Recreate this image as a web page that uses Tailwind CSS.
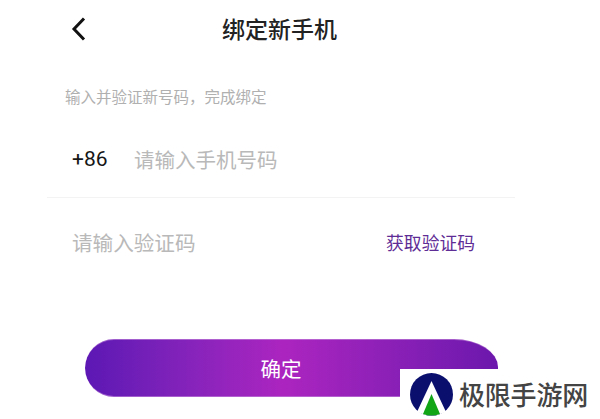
<!DOCTYPE html>
<html lang="zh-CN">
<head>
<meta charset="utf-8">
<script src="https://cdn.jsdelivr.net/npm/@tailwindcss/browser@4"></script>
</head>
<body class="bg-white overflow-hidden">
<div class="relative w-[600px] h-[419px] overflow-hidden bg-white font-['Noto_Sans_CJK_SC','Noto_Sans',sans-serif]">
  <header class="relative h-[60px] flex items-center justify-center pr-[41px] pb-[4px]">
    <svg class="absolute left-[70px] top-[16px] w-[18px] h-[26px]" viewBox="0 0 18 26" fill="none"><path d="M14 2.5 L4 13 L14 23.5" stroke="#111" stroke-width="3"/></svg>
    <h1 class="text-[23px] leading-[30px] font-medium text-[#222]">绑定新手机</h1>
  </header>
  <p class="ml-[65px] mt-[26px] text-[15.5px] leading-5 text-[#b0b0b0]">输入并验证新号码，完成绑定</p>
  <div class="mt-[22px] ml-[47px] w-[468px] h-[70px] pl-[25px] flex items-center border-b border-[#f3f3f3] pb-[7px]">
    <span class="w-[62px] text-[21px] leading-7 text-[#161616] font-['Roboto',sans-serif]">+86</span>
    <span class="text-[20.5px] leading-7 text-[#b9b9b9]">请输入手机号码</span>
  </div>
  <div class="ml-[72px] w-[403px] h-[90px] flex items-center justify-between pb-[2px]">
    <span class="text-[20.6px] leading-7 text-[#b9b9b9]">请输入验证码</span>
    <span class="text-[17.8px] leading-6 text-[#5f2d96]">获取验证码</span>
  </div>
  <button class="mt-[51px] ml-[85px] w-[413px] h-[58px] flex items-center justify-center pr-[21px] rounded-l-[29px] rounded-tr-[44px_28px] border-y border-[#c58bdc]/60 bg-linear-to-r from-[#5c17b4] via-[#ac24c0] via-[48%] to-[#6c17ad] text-white text-[20.5px]">确定</button>
  <div class="absolute left-[400px] top-[369px] w-[200px] h-[50px] bg-white flex items-center pl-[10px] gap-[6px]">
    <svg class="w-[43px] h-[43px] shrink-0" viewBox="0 0 43 43">
      <circle cx="21.5" cy="21.5" r="21.5" fill="#0a0f6e"/>
      <path d="M21.5 8 L36 39 Q21.5 46 7 39 Z" fill="#fff"/>
      <path d="M21.5 21 L30 41 Q21.5 44 13 41 Z" fill="#12a516"/>
    </svg>
    <span class="text-[26px] leading-8 tracking-[-0.2px] font-medium text-[#444] whitespace-nowrap">极限手游网</span>
  </div>
</div>
</body>
</html>
